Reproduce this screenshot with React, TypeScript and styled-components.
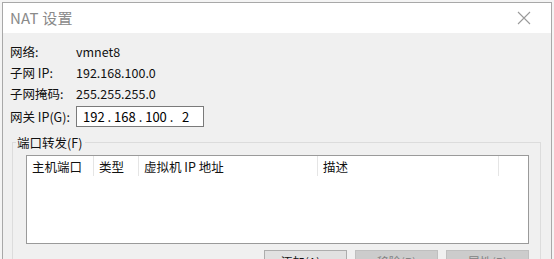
import React from "react";
import styled, { createGlobalStyle } from "styled-components";

const Global = createGlobalStyle`
  html, body { margin: 0; padding: 0; background: #e8e8e8; overflow: hidden; }
  body { font-family: "Noto Sans CJK SC", "Microsoft YaHei", sans-serif; font-size: 12px; color: #000; }
`;

const Screen = styled.div`
  width: 554px;
  height: 259px;
  padding: 2px 2px 0 2px;
  box-sizing: border-box;
  background: #f4f4f4;
  overflow: hidden;
`;

const Dialog = styled.div`
  height: 280px;
  border: 1px solid #a8a8a8;
  border-bottom: none;
  background: #f0f0f0;
  display: flex;
  flex-direction: column;
`;

const TitleBar = styled.div`
  height: 30px;
  background: #fff;
  display: flex;
  align-items: center;
  justify-content: space-between;
  padding: 0 20px 0 7px;
  flex-shrink: 0;
`;

const Title = styled.div`
  font-size: 15px;
  color: #8a8a8a;
  letter-spacing: 0.2px;
  margin-top: -2px;
`;

const Body = styled.div`
  padding: 8px 7px 0 7px;
  display: flex;
  flex-direction: column;
`;

const InfoGrid = styled.div`
  display: grid;
  grid-template-columns: 66px auto;
  grid-template-rows: 21px 21px 21px 25px;
  align-items: center;
  justify-items: start;
  font-size: 12.5px;
  line-height: 16px;
`;

const Label = styled.span`
  color: #111;
`;

const Value = styled.span`
  color: #111;
`;

const IpBox = styled.div`
  width: 120px;
  height: 19px;
  background: #fff;
  border: 1px solid #7a7a7a;
  display: flex;
  align-items: center;
  padding-left: 6px;
  box-sizing: content-box;
  font-size: 13px;
  white-space: pre;
`;

const Group = styled.fieldset`
  margin: 4px 3px 0 2px;
  padding: 3px 11px 8px 13px;
  border: 1px solid #dcdcdc;
  border-radius: 0;
  min-width: 0;
`;

const Legend = styled.legend`
  padding: 0 3px 0 1px;
  margin-left: -10px;
  color: #111;
  font-size: 12.5px;
`;

const ListView = styled.div`
  height: 87px;
  background: #fff;
  border: 1px solid #9a9a9a;
  display: flex;
  flex-direction: column;
`;

const HeaderRow = styled.div`
  display: flex;
  height: 20px;
  font-size: 12.5px;
`;

const HeaderCell = styled.div<{ $w: number }>`
  width: ${(p) => p.$w}px;
  flex-shrink: 0;
  padding-left: 5px;
  box-sizing: border-box;
  display: flex;
  align-items: center;
  border-right: 1px solid #e5e5e5;
  color: #111;
`;

const Buttons = styled.div`
  display: flex;
  justify-content: flex-end;
  gap: 8px;
  margin: 6px 0 0 0;
`;

const Button = styled.button<{ $disabled?: boolean }>`
  width: 83px;
  height: 23px;
  font-family: inherit;
  font-size: 12px;
  background: ${(p) => (p.$disabled ? "#cccccc" : "#e1e1e1")};
  border: 1px solid ${(p) => (p.$disabled ? "#bfbfbf" : "#adadad")};
  color: ${(p) => (p.$disabled ? "#838383" : "#111")};
  padding: 0;
`;

const CloseIcon = () => (
  <svg width="14" height="14" viewBox="0 0 14 14">
    <path d="M1 1 L13 13 M13 1 L1 13" stroke="#9a9a9a" strokeWidth="1.1" fill="none" />
  </svg>
);

export default function App() {
  return (
    <>
      <Global />
      <Screen>
        <Dialog>
          <TitleBar>
            <Title>NAT 设置</Title>
            <CloseIcon />
          </TitleBar>
          <Body>
            <InfoGrid>
              <Label>网络:</Label>
              <Value>vmnet8</Value>
              <Label>子网 IP:</Label>
              <Value>192.168.100.0</Value>
              <Label>子网掩码:</Label>
              <Value>255.255.255.0</Value>
              <Label>网关 IP(G):</Label>
              <IpBox>{"192 . 168 . 100 .   2"}</IpBox>
            </InfoGrid>
            <Group>
              <Legend>端口转发(F)</Legend>
              <ListView>
                <HeaderRow>
                  <HeaderCell $w={67}>主机端口</HeaderCell>
                  <HeaderCell $w={45}>类型</HeaderCell>
                  <HeaderCell $w={179}>虚拟机 IP 地址</HeaderCell>
                  <HeaderCell $w={181}>描述</HeaderCell>
                </HeaderRow>
              </ListView>
              <Buttons>
                <Button>添加(A)...</Button>
                <Button $disabled>移除(R)</Button>
                <Button $disabled>属性(P)</Button>
              </Buttons>
            </Group>
          </Body>
        </Dialog>
      </Screen>
    </>
  );
}
